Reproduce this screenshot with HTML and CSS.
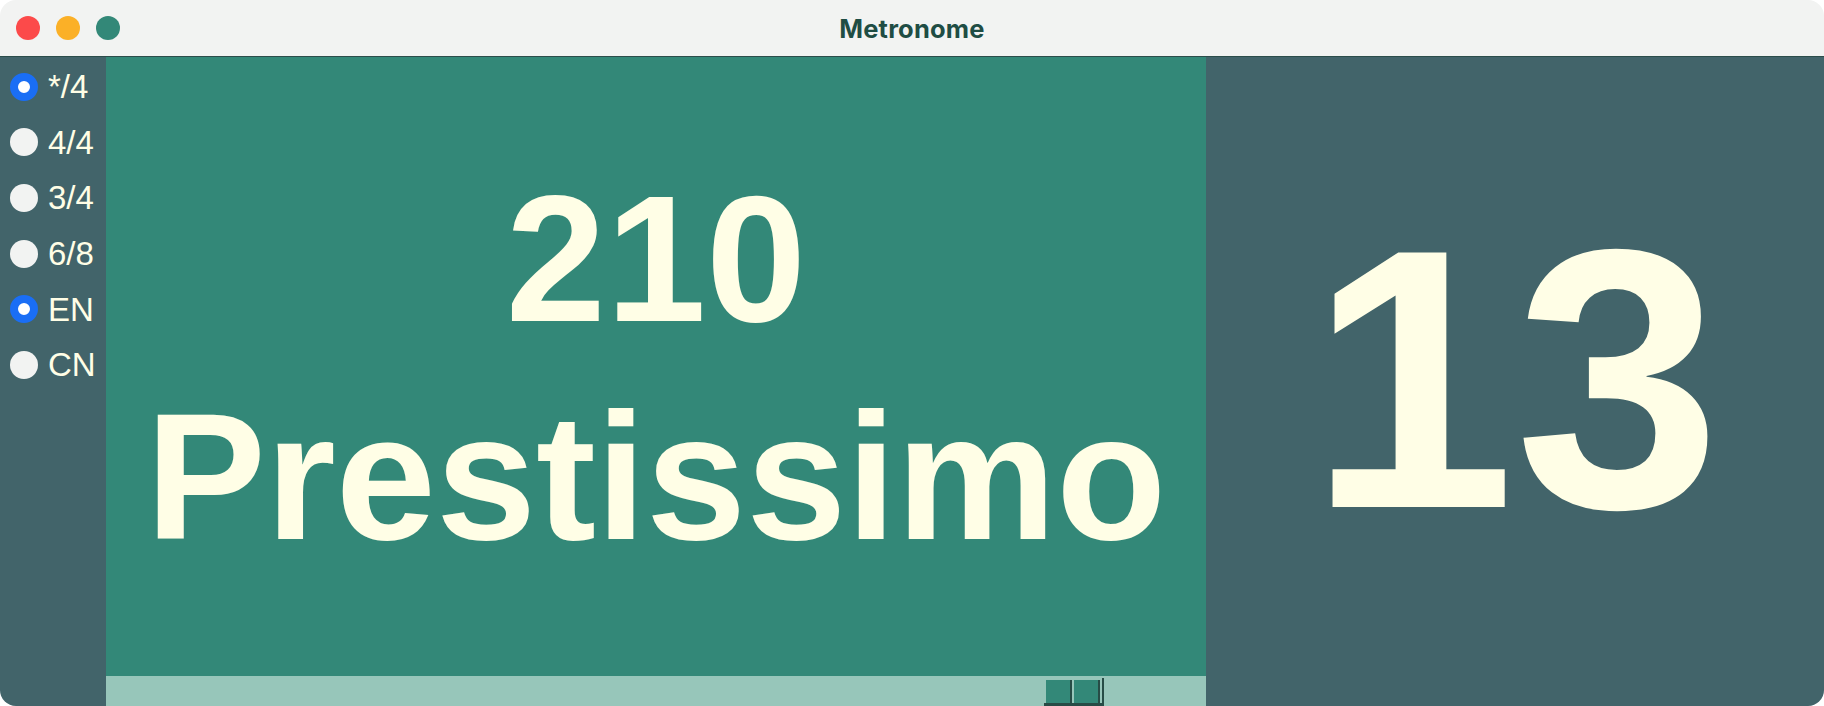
FILE: index.html
```html
<!DOCTYPE html>
<html>
<head>
<meta charset="utf-8">
<title>Metronome</title>
<link rel="stylesheet" href="styles.css">
</head>
<body>
<div class="window">
  <div class="titlebar">
    <div class="lights">
      <span class="light red"></span>
      <span class="light yellow"></span>
      <span class="light green"></span>
    </div>
    <div class="title">Metronome</div>
  </div>
  <div class="content">
    <div class="sidebar">
      <div class="radio-row"><span class="radio checked"></span><span class="label">*/4</span></div>
      <div class="radio-row"><span class="radio"></span><span class="label">4/4</span></div>
      <div class="radio-row"><span class="radio"></span><span class="label">3/4</span></div>
      <div class="radio-row"><span class="radio"></span><span class="label">6/8</span></div>
      <div class="radio-row"><span class="radio checked"></span><span class="label">EN</span></div>
      <div class="radio-row"><span class="radio"></span><span class="label">CN</span></div>
    </div>
    <div class="main">
      <div class="tempo">
        <div class="bpm">210</div>
        <div class="name">Prestissimo</div>
      </div>
      <div class="strip">
        <div class="knobs">
          <span class="knob"></span>
          <span class="knob"></span>
        </div>
      </div>
    </div>
    <div class="counter">
      <div class="count">13</div>
    </div>
  </div>
</div>
</body>
</html>
```

FILE: styles.css
```css
html, body {
  margin: 0;
  padding: 0;
  background: #ffffff;
}

.window {
  width: 1824px;
  height: 706px;
  border-radius: 16px;
  overflow: hidden;
  display: flex;
  flex-direction: column;
  font-family: "Liberation Sans", Arial, sans-serif;
}

.titlebar {
  height: 56px;
  flex: 0 0 56px;
  background: #f2f3f2;
  border-bottom: 1px solid #2c4d4b;
  position: relative;
  display: flex;
  align-items: center;
  justify-content: center;
}

.lights {
  position: absolute;
  left: 16px;
  top: 16px;
  display: flex;
  gap: 16px;
}

.light {
  width: 24px;
  height: 24px;
  border-radius: 50%;
  display: block;
}

.light.red { background: #fc4a4a; }
.light.yellow { background: #fbb027; }
.light.green { background: #338878; }

.title {
  font-family: Inter, "Liberation Sans", sans-serif;
  font-weight: 700;
  font-size: 25.5px;
  color: #1f4d44;
  letter-spacing: 0.2px;
}

.content {
  flex: 1;
  display: flex;
  min-height: 0;
}

.sidebar {
  width: 106px;
  flex: 0 0 106px;
  background: #42646a;
  padding-top: 2px;
  box-sizing: border-box;
}

.radio-row {
  height: 55.6px;
  display: flex;
  align-items: center;
  padding-left: 10px;
  gap: 10px;
}

.radio {
  width: 28px;
  height: 28px;
  border-radius: 50%;
  background: #f2f3f2;
  box-sizing: border-box;
  flex: 0 0 28px;
}

.radio.checked {
  background: #ffffff;
  border: 8px solid #1a6ef5;
}

.label {
  font-size: 33px;
  color: #fffee6;
  line-height: 1;
}

.main {
  width: 1100px;
  flex: 0 0 1100px;
  display: flex;
  flex-direction: column;
  background: #338878;
}

.tempo {
  flex: 1;
  display: flex;
  flex-direction: column;
  align-items: center;
  justify-content: center;
  color: #fffee6;
  font-weight: 700;
  font-size: 180px;
  line-height: 218px;
  padding-top: 2px;
  box-sizing: border-box;
}

.strip {
  height: 30px;
  flex: 0 0 30px;
  background: #97c6ba;
  display: flex;
  align-items: flex-end;
  padding-left: 938px;
  box-sizing: border-box;
}

.knobs {
  display: flex;
  gap: 2px;
  padding: 2px 2px 3px 2px;
  height: 28px;
  box-sizing: border-box;
  background: #97c6ba;
  border-right: 2px solid #274c46;
  border-bottom: 3px solid #274c46;
}

.knob {
  width: 24px;
  height: 23px;
  background: #338878;
  border-right: 2px solid #274c46;
  display: block;
}

.counter {
  flex: 1;
  background: #42646a;
  display: flex;
  align-items: center;
  justify-content: center;
}

.count {
  color: #fffee6;
  font-weight: 700;
  font-size: 370px;
  line-height: 1;
  padding-bottom: 6px;
}
```
